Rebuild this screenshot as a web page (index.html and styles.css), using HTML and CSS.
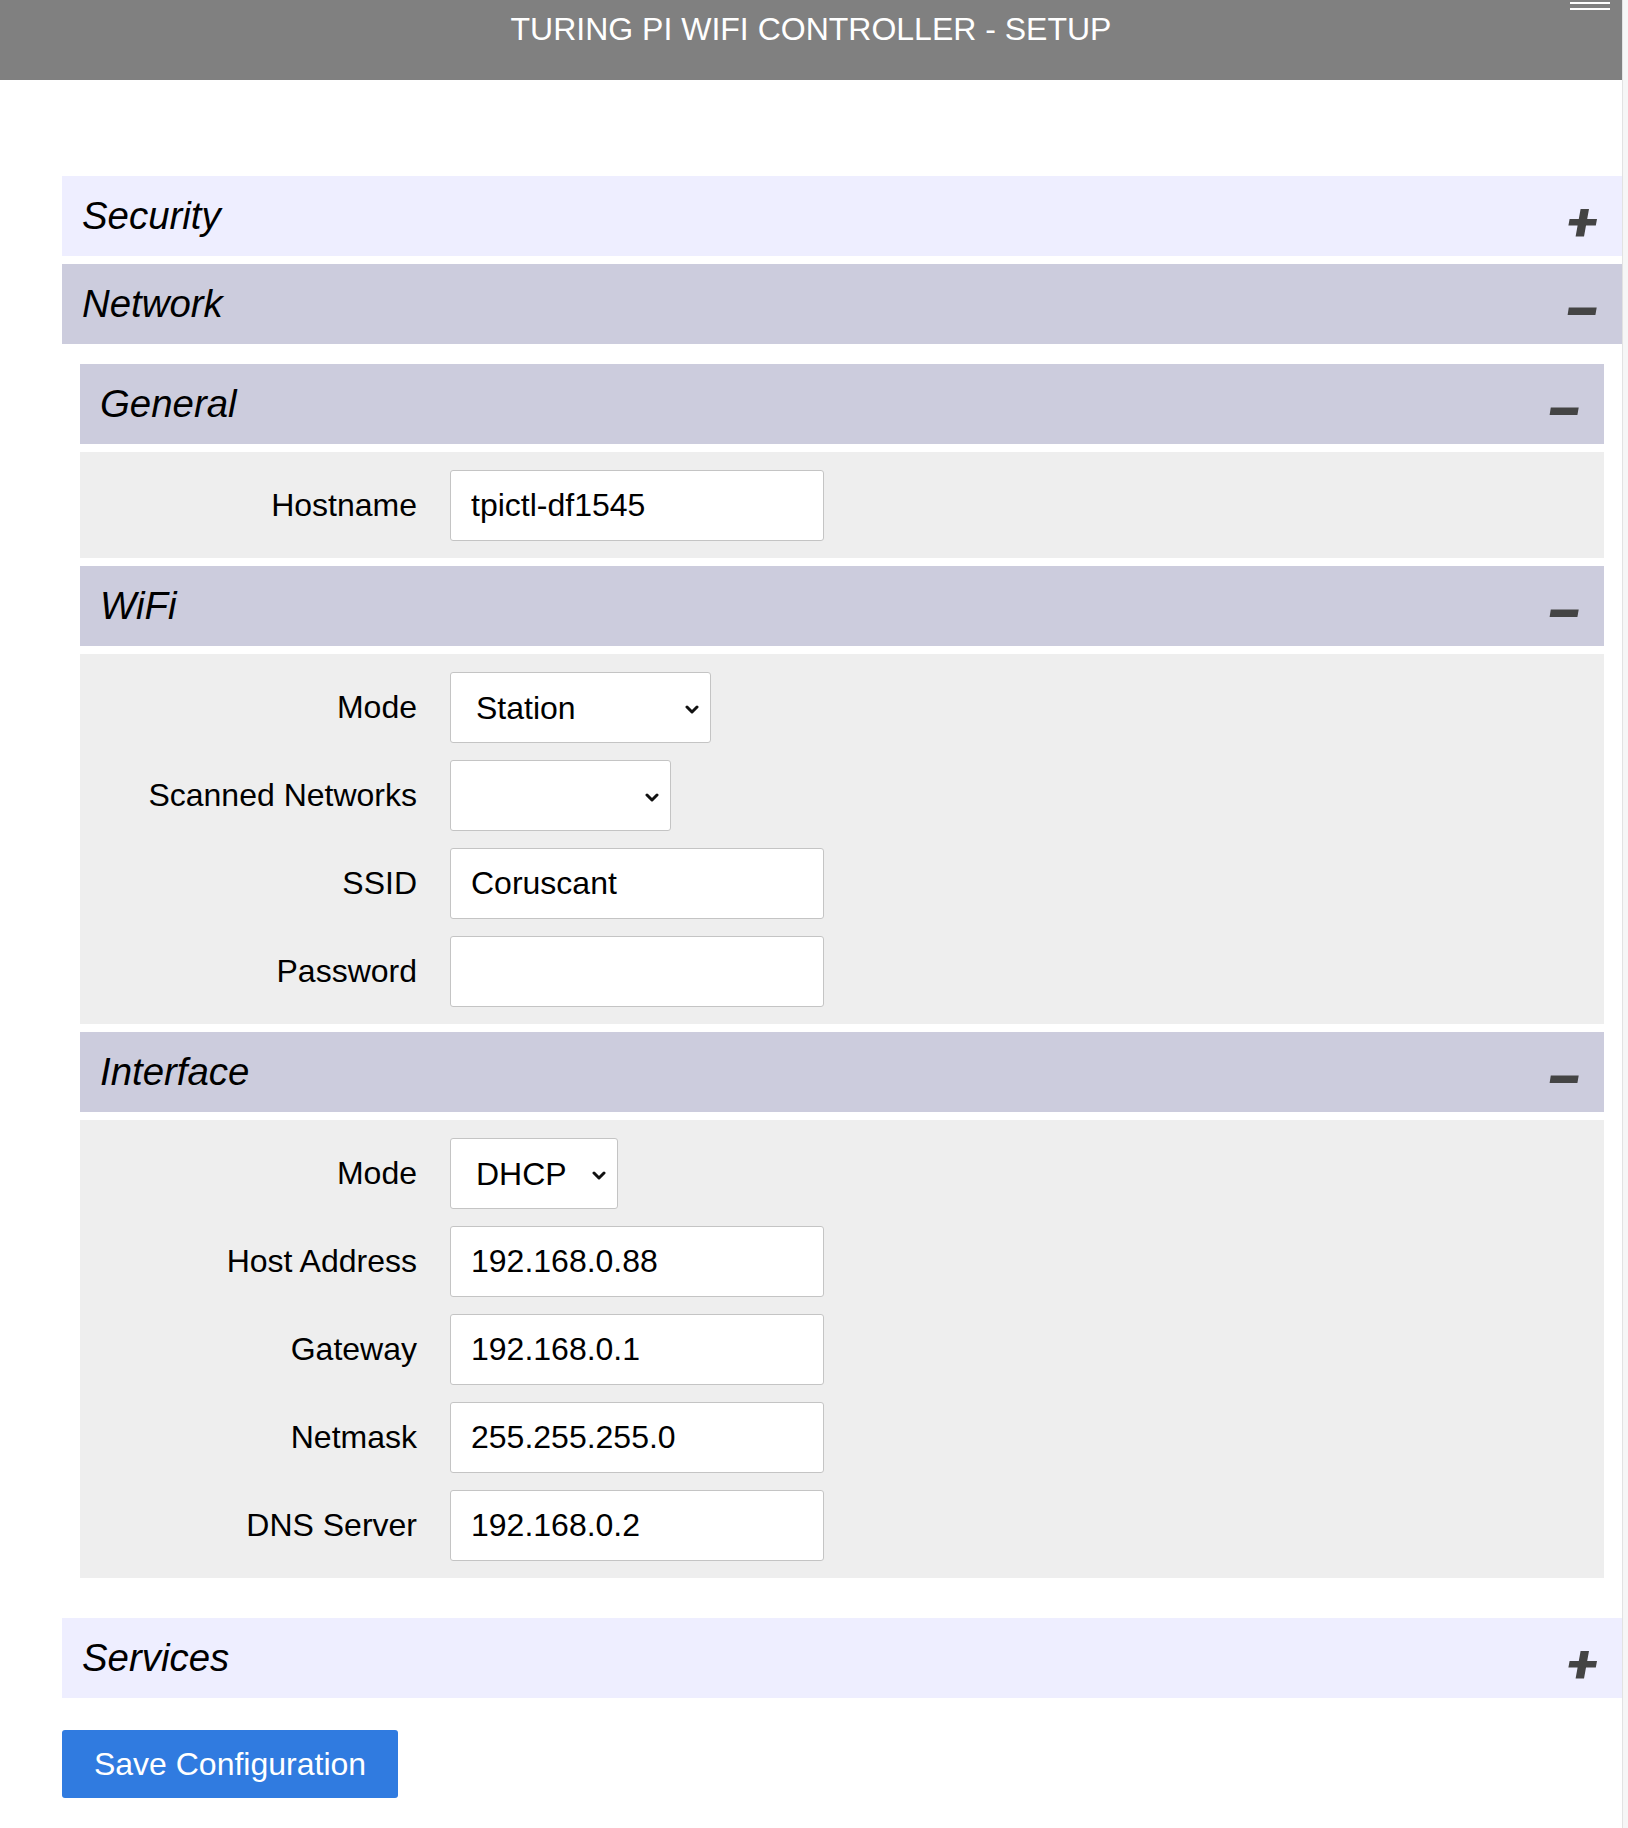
FILE: index.html
```html
<!DOCTYPE html>
<html lang="en">
<head>
<meta charset="utf-8">
<title>Turing Pi WiFi Controller - Setup</title>
<link rel="stylesheet" href="styles.css">
</head>
<body>
<div class="page">
  <div class="main">
    <header class="topbar">
      <h1 class="title">TURING PI WIFI CONTROLLER - SETUP</h1>
      <div class="menu"><span></span><span></span></div>
    </header>
    <main class="content">
      <section class="sec">
        <div class="sec-head light">
          <span class="sec-title">Security</span>
          <svg class="tg" viewBox="0 0 30 28" width="30" height="28"><path d="M2.6 10 H30 L28.8 16.6 H1.4 Z M13.6 0 H22 L17 27.5 H8.6 Z"/></svg>
        </div>
      </section>
      <section class="sec">
        <div class="sec-head">
          <span class="sec-title">Network</span>
          <svg class="tg" viewBox="0 0 30 28" width="30" height="28"><path d="M1.8 10.5 H29.7 L28.4 18 H0.6 Z"/></svg>
        </div>
        <div class="sec-inner">
          <section class="sub">
            <div class="sec-head sub-head">
              <span class="sec-title">General</span>
              <svg class="tg" viewBox="0 0 30 28" width="30" height="28"><path d="M1.8 10.5 H29.7 L28.4 18 H0.6 Z"/></svg>
            </div>
            <div class="sub-body">
              <div class="row"><label class="lbl">Hostname</label><input class="field" type="text" value="tpictl-df1545"></div>
            </div>
          </section>
          <section class="sub">
            <div class="sec-head sub-head">
              <span class="sec-title">WiFi</span>
              <svg class="tg" viewBox="0 0 30 28" width="30" height="28"><path d="M1.8 10.5 H29.7 L28.4 18 H0.6 Z"/></svg>
            </div>
            <div class="sub-body">
              <div class="row"><label class="lbl">Mode</label>
                <div class="selwrap"><select class="sel sel-mode"><option>Station</option></select>
                <svg class="chev" viewBox="0 0 14 9" width="14" height="9"><path d="M2 2 L7 7 L12 2"/></svg></div>
              </div>
              <div class="row"><label class="lbl">Scanned Networks</label>
                <div class="selwrap"><select class="sel sel-scan"><option></option></select>
                <svg class="chev" viewBox="0 0 14 9" width="14" height="9"><path d="M2 2 L7 7 L12 2"/></svg></div>
              </div>
              <div class="row"><label class="lbl">SSID</label><input class="field" type="text" value="Coruscant"></div>
              <div class="row"><label class="lbl">Password</label><input class="field" type="password" value=""></div>
            </div>
          </section>
          <section class="sub">
            <div class="sec-head sub-head">
              <span class="sec-title">Interface</span>
              <svg class="tg" viewBox="0 0 30 28" width="30" height="28"><path d="M1.8 10.5 H29.7 L28.4 18 H0.6 Z"/></svg>
            </div>
            <div class="sub-body">
              <div class="row"><label class="lbl">Mode</label>
                <div class="selwrap"><select class="sel sel-dhcp"><option>DHCP</option></select>
                <svg class="chev" viewBox="0 0 14 9" width="14" height="9"><path d="M2 2 L7 7 L12 2"/></svg></div>
              </div>
              <div class="row"><label class="lbl">Host Address</label><input class="field" type="text" value="192.168.0.88"></div>
              <div class="row"><label class="lbl">Gateway</label><input class="field" type="text" value="192.168.0.1"></div>
              <div class="row"><label class="lbl">Netmask</label><input class="field" type="text" value="255.255.255.0"></div>
              <div class="row"><label class="lbl">DNS Server</label><input class="field" type="text" value="192.168.0.2"></div>
            </div>
          </section>
        </div>
      </section>
      <section class="sec">
        <div class="sec-head light">
          <span class="sec-title">Services</span>
          <svg class="tg" viewBox="0 0 30 28" width="30" height="28"><path d="M2.6 10 H30 L28.8 16.6 H1.4 Z M13.6 0 H22 L17 27.5 H8.6 Z"/></svg>
        </div>
      </section>
      <button class="save" type="button">Save Configuration</button>
    </main>
  </div>
  <div class="strip"></div>
</div>
</body>
</html>
```
FILE: styles.css
```css
html, body {
  margin: 0;
  padding: 0;
  background: #ffffff;
}
body {
  font-family: "Liberation Sans", Arial, Helvetica, sans-serif;
  color: #000;
}
.page {
  display: flex;
  min-height: 1828px;
}
.main {
  flex: 1;
  min-width: 0;
}
.strip {
  width: 6px;
  box-sizing: border-box;
  border-left: 1px solid #e2e2e2;
  background: #f6f6f6;
}
.topbar {
  position: relative;
  height: 80px;
  box-sizing: border-box;
  padding-top: 13px;
  background: #808080;
}
.title {
  margin: 0;
  font-weight: normal;
  font-size: 32px;
  line-height: 32px;
  color: #ffffff;
  text-align: center;
}
.menu {
  position: absolute;
  top: 2px;
  right: 12px;
  width: 40px;
}
.menu span {
  display: block;
  height: 2px;
  background: #ffffff;
  margin-bottom: 4px;
}
.content {
  padding: 96px 0 30px 62px;
}
.sec + .sec {
  margin-top: 8px;
}
.sec-head {
  height: 80px;
  box-sizing: border-box;
  display: flex;
  align-items: center;
  justify-content: space-between;
  padding: 0 25px 0 20px;
  background: #ccccdd;
}
.sec-head.light {
  background: #eeeeff;
}
.sec-title {
  font-style: italic;
  font-size: 38.4px;
  color: #000;
}
.tg {
  display: block;
  margin-top: 14px;
  fill: #444444;
}
.sec-inner {
  padding: 20px 18px 32px 18px;
}
.sub + .sub {
  margin-top: 8px;
}
.sub-head {
  margin-bottom: 8px;
}
.sub-body {
  background: #eeeeee;
  padding: 18px 0 17px 0;
  display: flex;
  flex-direction: column;
  gap: 17px;
}
.row {
  display: flex;
  align-items: center;
}
.lbl {
  width: 337px;
  margin-right: 33px;
  text-align: right;
  font-size: 32px;
  color: #000;
}
.field {
  width: 374px;
  height: 71px;
  box-sizing: border-box;
  border: 1px solid #c4c4c4;
  border-radius: 3px;
  padding: 0 20px;
  margin: 0;
  background: #ffffff;
  font-family: "Liberation Sans", Arial, Helvetica, sans-serif;
  font-size: 32px;
  color: #000;
  outline: none;
}
.selwrap {
  position: relative;
  display: block;
}
.sel {
  display: block;
  -webkit-appearance: none;
  appearance: none;
  height: 71px;
  box-sizing: border-box;
  border: 1px solid #c4c4c4;
  border-radius: 3px;
  padding: 0 30px 0 25px;
  margin: 0;
  background: #ffffff;
  font-family: "Liberation Sans", Arial, Helvetica, sans-serif;
  font-size: 32px;
  color: #000;
  outline: none;
}
.sel-mode { width: 261px; }
.sel-scan { width: 221px; }
.sel-dhcp { width: 168px; }
.chev {
  position: absolute;
  right: 12px;
  top: 50%;
  margin-top: -3px;
  pointer-events: none;
  fill: none;
  stroke: #111111;
  stroke-width: 3;
  stroke-linecap: round;
  stroke-linejoin: round;
}
.save {
  display: block;
  margin-top: 32px;
  width: 336px;
  height: 68px;
  border: none;
  border-radius: 3px;
  background: #307be0;
  color: #ffffff;
  font-family: "Liberation Sans", Arial, Helvetica, sans-serif;
  font-size: 32px;
  padding: 0;
  text-align: center;
}
```
